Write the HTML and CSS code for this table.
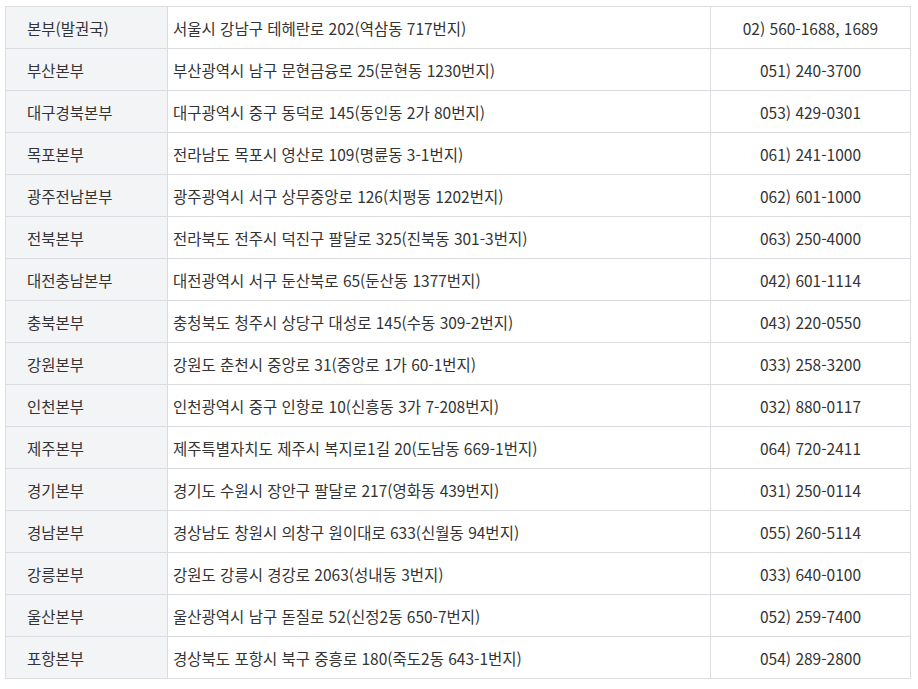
FILE: index.html
```html
<!DOCTYPE html>
<html lang="ko">
<head>
<meta charset="utf-8">
<link rel="stylesheet" href="styles.css">
</head>
<body>
<table class="branches">
<colgroup><col class="c1"><col class="c2"><col class="c3"></colgroup>
<tbody>
<tr><th>본부(발권국)</th><td>서울시 강남구 테헤란로 202(역삼동 717번지)</td><td class="tel">02) 560-1688, 1689</td></tr>
<tr><th>부산본부</th><td>부산광역시 남구 문현금융로 25(문현동 1230번지)</td><td class="tel">051) 240-3700</td></tr>
<tr><th>대구경북본부</th><td>대구광역시 중구 동덕로 145(동인동 2가 80번지)</td><td class="tel">053) 429-0301</td></tr>
<tr><th>목포본부</th><td>전라남도 목포시 영산로 109(명륜동 3-1번지)</td><td class="tel">061) 241-1000</td></tr>
<tr><th>광주전남본부</th><td>광주광역시 서구 상무중앙로 126(치평동 1202번지)</td><td class="tel">062) 601-1000</td></tr>
<tr><th>전북본부</th><td>전라북도 전주시 덕진구 팔달로 325(진북동 301-3번지)</td><td class="tel">063) 250-4000</td></tr>
<tr><th>대전충남본부</th><td>대전광역시 서구 둔산북로 65(둔산동 1377번지)</td><td class="tel">042) 601-1114</td></tr>
<tr><th>충북본부</th><td>충청북도 청주시 상당구 대성로 145(수동 309-2번지)</td><td class="tel">043) 220-0550</td></tr>
<tr><th>강원본부</th><td>강원도 춘천시 중앙로 31(중앙로 1가 60-1번지)</td><td class="tel">033) 258-3200</td></tr>
<tr><th>인천본부</th><td>인천광역시 중구 인항로 10(신흥동 3가 7-208번지)</td><td class="tel">032) 880-0117</td></tr>
<tr><th>제주본부</th><td>제주특별자치도 제주시 복지로1길 20(도남동 669-1번지)</td><td class="tel">064) 720-2411</td></tr>
<tr><th>경기본부</th><td>경기도 수원시 장안구 팔달로 217(영화동 439번지)</td><td class="tel">031) 250-0114</td></tr>
<tr><th>경남본부</th><td>경상남도 창원시 의창구 원이대로 633(신월동 94번지)</td><td class="tel">055) 260-5114</td></tr>
<tr><th>강릉본부</th><td>강원도 강릉시 경강로 2063(성내동 3번지)</td><td class="tel">033) 640-0100</td></tr>
<tr><th>울산본부</th><td>울산광역시 남구 돋질로 52(신정2동 650-7번지)</td><td class="tel">052) 259-7400</td></tr>
<tr><th>포항본부</th><td>경상북도 포항시 북구 중흥로 180(죽도2동 643-1번지)</td><td class="tel">054) 289-2800</td></tr>
</tbody>
</table>
</body>
</html>
```
FILE: styles.css
```css
html, body {
  margin: 0;
  background: #ffffff;
}
body {
  padding: 6px 5px;
  font-family: "Noto Sans CJK KR", "Noto Sans", sans-serif;
  font-size: 15.5px;
  color: #333333;
}
.branches {
  border-collapse: collapse;
  width: 905px;
  table-layout: fixed;
}
.c1 { width: 162px; }
.c2 { width: 543px; }
.c3 { width: 200px; }
.branches th,
.branches td {
  height: 41px;
  padding: 0;
  border: 1px solid #dcdce0;
  vertical-align: middle;
  font-weight: 400;
  line-height: 20px;
  white-space: nowrap;
}
.branches th {
  background: #f3f4f6;
  text-align: left;
  padding-left: 21px;
}
.branches td {
  text-align: left;
  padding-left: 5px;
}
.branches td.tel {
  text-align: center;
  padding-left: 0;
}
```
